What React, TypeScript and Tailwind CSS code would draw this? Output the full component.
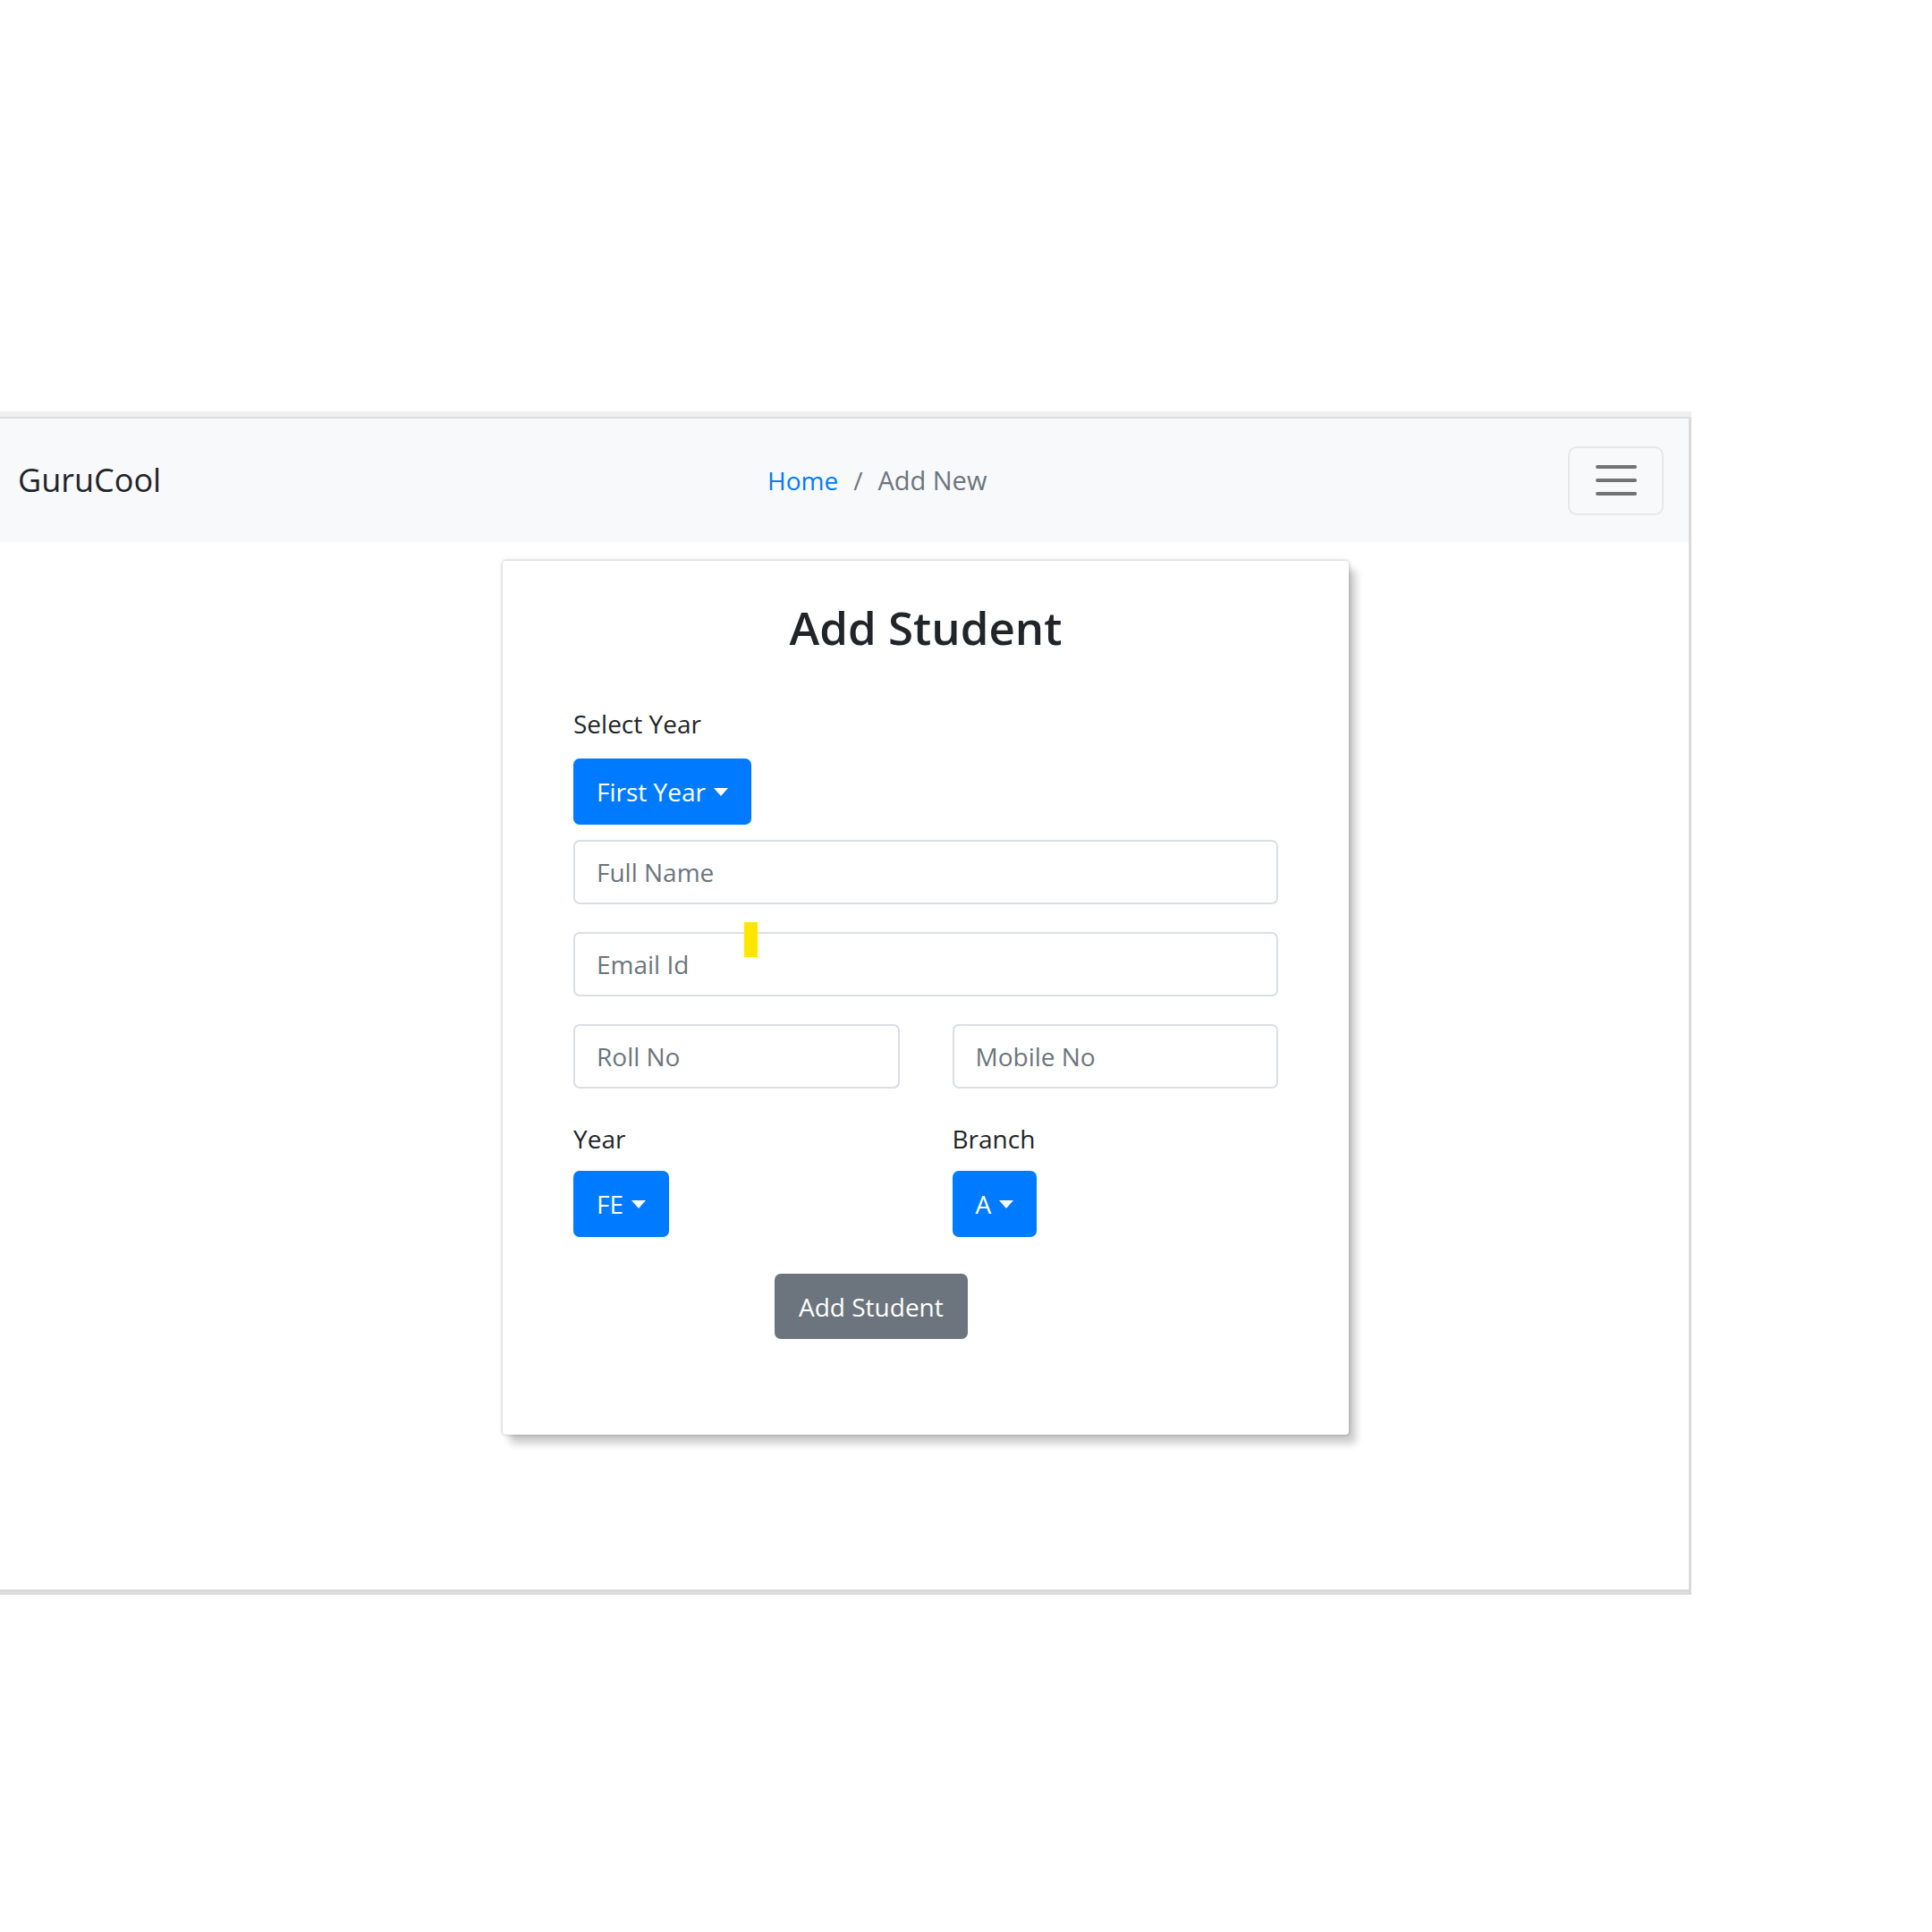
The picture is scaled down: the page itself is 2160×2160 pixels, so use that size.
import React from "react";

function Caret() {
  return <span className="ml-[9px] inline-block h-0 w-0 border-x-[8px] border-t-[9px] border-x-transparent border-t-white" />;
}

function DropButton({ label, className = "" }: { label: string; className?: string }) {
  return (
    <button className={`flex h-[74px] items-center rounded-[7px] bg-[#007bff] px-[26px] text-[28px] leading-[42px] text-white ${className}`}>
      {label}
      <Caret />
    </button>
  );
}

function Field({ placeholder }: { placeholder: string }) {
  return (
    <input
      placeholder={placeholder}
      className="h-[72px] w-full rounded-[7px] border-2 border-[#dadfe3] bg-white px-[24px] text-[28px] text-[#495057] outline-none placeholder:text-[#6c757d]"
    />
  );
}

export default function App() {
  return (
    <div className="h-[2160px] w-[2160px] bg-white pt-[460px] font-['Open_Sans',sans-serif] text-[#212529]">
      <div className="w-[1891px]">
        {/* top strip of the captured window */}
        <div className="h-[8px] border-b-2 border-[#dedede] bg-[#f0f0f0]" />

        <div className="border-b-[6px] border-r-[3px] border-[#dadada]">
          {/* Navbar */}
          <nav className="flex h-[138px] items-center bg-[#f8f9fa] pl-[20px]">
            <div className="w-[838px] text-[36px] leading-[54px] text-[#212529]">GuruCool</div>
            <div className="flex items-center text-[28px] leading-[42px]">
              <span className="text-[#007bff]">Home</span>
              <span className="px-[17px] text-[#6c757d]">/</span>
              <span className="text-[29px] text-[#6c757d]">Add New</span>
            </div>
            <button className="ml-auto mr-[28px] flex h-[77px] w-[107px] flex-col items-center justify-center gap-[11px] rounded-[10px] border-2 border-[#e6e7e8]">
              <span className="h-[4px] w-[46px] rounded-full bg-[#737373]" />
              <span className="h-[4px] w-[46px] rounded-full bg-[#737373]" />
              <span className="h-[4px] w-[46px] rounded-full bg-[#737373]" />
            </button>
          </nav>

          {/* Body */}
          <div className="h-[1171px] pl-[562px] pt-[21px]">
            <div className="relative w-[946px] rounded-[4px] bg-white px-[79px] pb-[107px] pt-[44px] shadow-[0_0_4px_rgba(0,0,0,0.3),8px_10px_9px_rgba(0,0,0,0.2)]">
              <h3 className="text-center text-[51px] font-semibold leading-[61px]">Add Student</h3>

              <div className="mt-[56px] text-[28px] leading-[42px]">Select Year</div>
              <DropButton label="First Year" className="mt-[18px] h-[73px]" />

              <div className="mt-[17px] flex flex-col gap-[31px]">
                <Field placeholder="Full Name" />
                <Field placeholder="Email Id" />
                <div className="grid grid-cols-2 gap-[59px]">
                  <Field placeholder="Roll No" />
                  <Field placeholder="Mobile No" />
                </div>
              </div>

              <div className="mt-[35px] grid grid-cols-2 gap-[59px]">
                <div>
                  <div className="text-[28px] leading-[42px]">Year</div>
                  <DropButton label="FE" className="mt-[15px]" />
                </div>
                <div>
                  <div className="text-[28px] leading-[42px]">Branch</div>
                  <DropButton label="A" className="mt-[15px] px-[24px]" />
                </div>
              </div>

              <button className="ml-[225px] mt-[41px] h-[73px] rounded-[7px] bg-[#6c757d] px-[27px] text-[28px] leading-[42px] text-white">
                Add Student
              </button>

              {/* yellow highlight marker */}
              <span className="absolute left-[270px] top-[404px] h-[39px] w-[15px] bg-[#ffe600]" />
            </div>
          </div>
        </div>
      </div>
    </div>
  );
}
